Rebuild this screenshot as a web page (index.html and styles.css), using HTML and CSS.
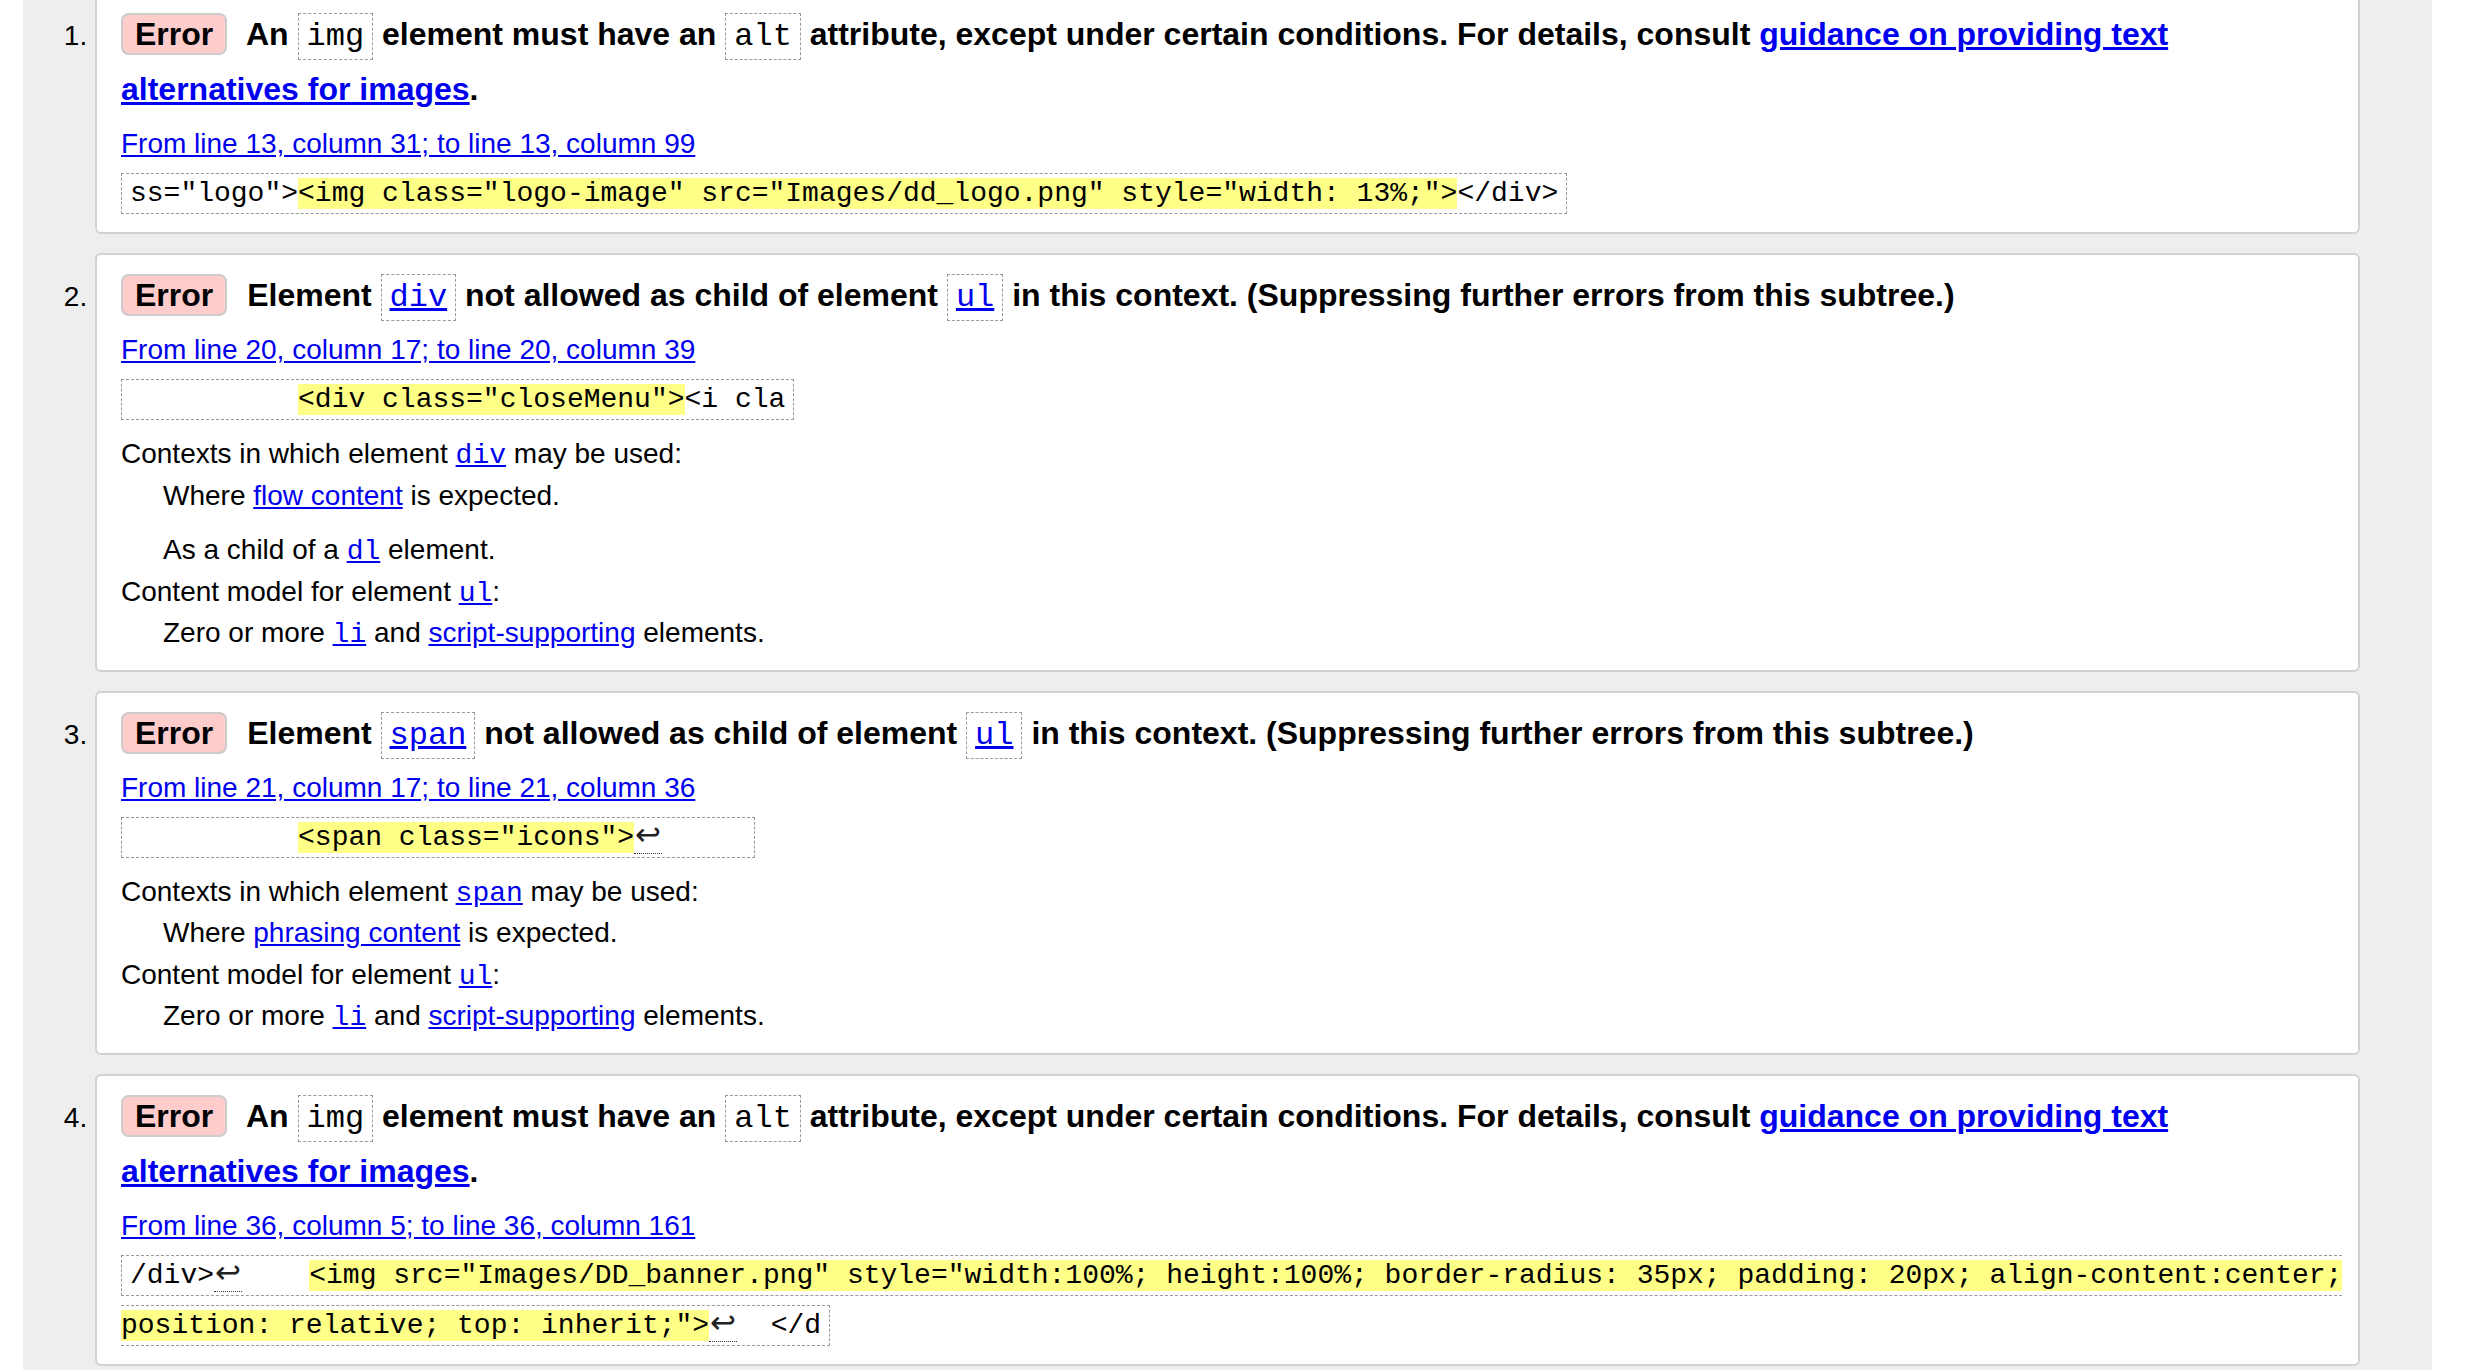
FILE: index.html
```html
<!DOCTYPE html>
<html lang="en">
<head>
<meta charset="utf-8">
<title>Nu Html Checker results</title>
<link rel="stylesheet" href="styles.css">
</head>
<body>
<div class="page">
<ol class="messages">
<li class="msg">
<p class="title"><strong class="badge">Error</strong> An <code class="tc">img</code> element must have an <code class="tc">alt</code> attribute, except under certain conditions. For details, consult <a href="#">guidance on providing text alternatives for images</a>.</p>
<p class="loc"><a href="#">From line 13, column 31; to line 13, column 99</a></p>
<p class="ex"><code class="extract">ss="logo"&gt;<b>&lt;img class="logo-image" src="Images/dd_logo.png" style="width: 13%;"&gt;</b>&lt;/div&gt;</code></p>
</li>
<li class="msg">
<p class="title"><strong class="badge">Error</strong> Element <a href="#"><code class="tc">div</code></a> not allowed as child of element <a href="#"><code class="tc">ul</code></a> in this context. (Suppressing further errors from this subtree.)</p>
<p class="loc"><a href="#">From line 20, column 17; to line 20, column 39</a></p>
<p class="ex"><code class="extract">          <b>&lt;div class="closeMenu"&gt;</b>&lt;i cla</code></p>
<dl class="info">
<dt>Contexts in which element <a href="#"><code>div</code></a> may be used:</dt>
<dd>Where <a href="#">flow content</a> is expected.</dd>
<dd class="gap">As a child of a <a href="#"><code>dl</code></a> element.</dd>
<dt>Content model for element <a href="#"><code>ul</code></a>:</dt>
<dd>Zero or more <a href="#"><code>li</code></a> and <a href="#">script-supporting</a> elements.</dd>
</dl>
</li>
<li class="msg">
<p class="title"><strong class="badge">Error</strong> Element <a href="#"><code class="tc">span</code></a> not allowed as child of element <a href="#"><code class="tc">ul</code></a> in this context. (Suppressing further errors from this subtree.)</p>
<p class="loc"><a href="#">From line 21, column 17; to line 21, column 36</a></p>
<p class="ex"><code class="extract">          <b>&lt;span class="icons"&gt;</b><span class="lf" title="Line break">↩</span>     </code></p>
<dl class="info">
<dt>Contexts in which element <a href="#"><code>span</code></a> may be used:</dt>
<dd>Where <a href="#">phrasing content</a> is expected.</dd>
<dt>Content model for element <a href="#"><code>ul</code></a>:</dt>
<dd>Zero or more <a href="#"><code>li</code></a> and <a href="#">script-supporting</a> elements.</dd>
</dl>
</li>
<li class="msg">
<p class="title"><strong class="badge">Error</strong> An <code class="tc">img</code> element must have an <code class="tc">alt</code> attribute, except under certain conditions. For details, consult <a href="#">guidance on providing text alternatives for images</a>.</p>
<p class="loc"><a href="#">From line 36, column 5; to line 36, column 161</a></p>
<p class="ex"><code class="extract wrap">/div&gt;<span class="lf" title="Line break">↩</span>&nbsp;&nbsp;&nbsp;&nbsp;<b>&lt;img src="Images/DD_banner.png" style="width:100%; height:100%; border-radius: 35px; padding: 20px; align-content:center; position: relative; top: inherit;"&gt;</b><span class="lf" title="Line break">↩</span>&nbsp;&nbsp;&lt;/d</code></p>
</li>
</ol>
</div>
</body>
</html>
```
FILE: styles.css
```css
html, body {
  margin: 0;
  padding: 0;
  background: #fff;
}

body {
  font-family: "Liberation Sans", Arial, Helvetica, sans-serif;
  color: #000;
}

.page {
  display: flow-root;
  margin-left: 23px;
  width: 2409px;
  min-height: 100vh;
  box-sizing: border-box;
  padding: 0 72px;
  background: #eee;
}

.messages {
  margin: -8px 0 0;
  padding: 0;
  list-style: decimal outside;
}

.msg {
  background: #fff;
  border: 2px solid #d2d2d2;
  border-radius: 6px;
  padding: 13px 10px 13px 24px;
  margin: 0 0 19px;
  font-size: 28px;
}

.msg:last-child {
  margin-bottom: 0;
}

.msg::marker {
  font-size: 28px;
  color: #000;
}

a {
  color: #0000ee;
  text-decoration: underline;
}

.title {
  margin: 0;
  font-size: 32px;
  font-weight: 700;
  line-height: 55px;
}

.badge {
  font-weight: 700;
  background: #fcc;
  border: 2px solid #ccc;
  border-radius: 8px;
  padding: 1px 12px;
  margin-right: 11px;
}

.tc {
  font-family: "Liberation Mono", "Courier New", monospace;
  font-weight: 400;
  font-size: 32px;
  line-height: 1;
  border: 1px dashed #999;
  padding: 4px 8px;
}

.loc {
  margin: 7px 0 0;
  font-size: 28px;
  line-height: 40px;
}

.ex {
  margin: 5px 0 0;
  font-family: "Liberation Mono", "Courier New", monospace;
  font-size: 28px;
  line-height: 50px;
}

.extract {
  font-family: inherit;
  font-size: 28px;
  border: 1px dashed #999;
  padding: 4px 8px;
  white-space: pre;
}

.extract.wrap {
  white-space: normal;
}

.extract b {
  font-weight: 400;
  background: #ff8;
}

.lf {
  font-family: "DejaVu Sans", sans-serif;
  font-size: 31px;
  line-height: 1;
  color: #222;
  border-bottom: 1px dotted #333;
  padding: 0 1px 1px;
}

.info {
  margin: 8px 0 3px;
  font-size: 28px;
  line-height: 41.5px;
}

.info dt {
  margin: 0;
}

.info dd {
  margin: 0 0 0 42px;
}

.info dd.gap {
  margin-top: 13px;
}

.info code {
  font-family: "Liberation Mono", "Courier New", monospace;
  font-size: 28px;
  line-height: 1;
}
```
